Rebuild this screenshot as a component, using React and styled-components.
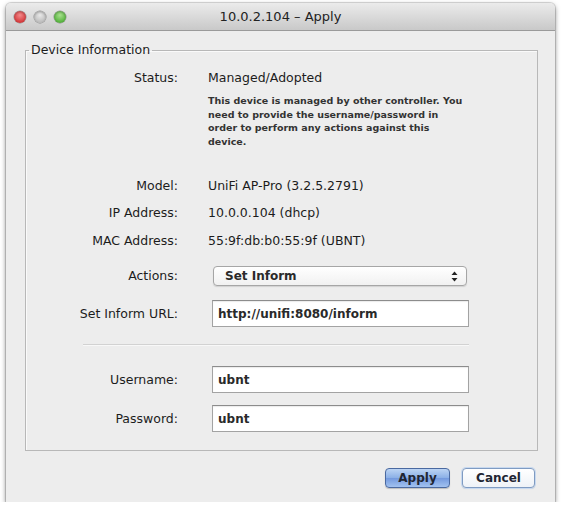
import styled, { createGlobalStyle } from 'styled-components';

const GlobalStyle = createGlobalStyle`
  html, body {
    margin: 0;
    background: #ffffff;
  }
  body {
    font-family: "DejaVu Sans", "Liberation Sans", sans-serif;
    color: #222;
  }
`;

const Page = styled.div`
  padding: 3px 10px 0 6px;
`;

const Window = styled.div`
  width: 549px;
  height: 499px;
  display: flex;
  flex-direction: column;
  background: #ededed;
  border-radius: 5px 5px 0 0;
  box-shadow: 0 2px 5px rgba(0, 0, 0, 0.5), 0 0 0 1px rgba(0, 0, 0, 0.12);
  overflow: hidden;
`;

const TitleBar = styled.div`
  height: 27px;
  display: grid;
  grid-template-columns: 1fr auto 1fr;
  align-items: center;
  padding: 0 8px;
  background: linear-gradient(#ebebeb, #c9c9c9);
  border-bottom: 1px solid #9a9a9a;
`;

const Lights = styled.div`
  display: flex;
  gap: 8px;
`;

const Light = styled.span`
  width: 12px;
  height: 12px;
  border-radius: 50%;
  background: ${p => p.$color};
  box-shadow: inset 0 1px 2px rgba(0, 0, 0, 0.25), 0 0 0 0.5px rgba(0, 0, 0, 0.35);
`;

const Title = styled.div`
  font-size: 13px;
  color: #222;
`;

const Body = styled.div`
  flex: 1;
  padding: 11px 17px 0 19px;
`;

const Group = styled.fieldset`
  margin: 0;
  padding: 0 0 18px;
  border: 1px solid #b8b8b8;
  box-shadow: inset 1px 1px 0 #fafafa;
`;

const Legend = styled.legend`
  margin-left: 3px;
  padding: 0 2px;
  font-size: 12.5px;
  line-height: 16px;
  color: #1c1c1c;
`;

const Row = styled.div`
  display: grid;
  grid-template-columns: 152px 1fr;
  column-gap: 30px;
  align-items: center;
  min-height: 18px;
  margin-top: ${p => p.$top}px;
`;

const Label = styled.div`
  text-align: right;
  font-size: 12.5px;
  line-height: 18px;
  color: #1c1c1c;
`;

const Value = styled.div`
  font-size: 12.5px;
  line-height: 18px;
  color: #1c1c1c;
`;

const Note = styled.p`
  margin: 0;
  font-size: 9.5px;
  font-weight: bold;
  line-height: 13.5px;
  color: #333;
  white-space: pre-line;
`;

const SelectBox = styled.div`
  margin-left: 5px;
  width: 254px;
  height: 20px;
  box-sizing: border-box;
  display: flex;
  align-items: center;
  justify-content: space-between;
  padding: 0 8px 0 11px;
  border: 1px solid #a6a6a6;
  border-radius: 4px;
  background: linear-gradient(#ffffff, #f1f1f1);
  box-shadow: 0 1px 1px rgba(0, 0, 0, 0.12);
  font-size: 12px;
  font-weight: bold;
  color: #2a2a2a;
`;

const Field = styled.input`
  margin-left: 4px;
  width: 257px;
  height: 27px;
  box-sizing: border-box;
  padding: 0 5px;
  border: 1px solid #a3a3a3;
  border-top-color: #8c8c8c;
  background: #fff;
  box-shadow: inset 0 1px 1px rgba(0, 0, 0, 0.08);
  font-family: "DejaVu Sans", "Liberation Sans", sans-serif;
  font-size: 12px;
  font-weight: bold;
  color: #2a2a2a;
  outline: none;
`;

const Divider = styled.hr`
  margin: 17px 0 0 57px;
  width: 386px;
  height: 0;
  border: 0;
  border-top: 1px solid #d2d2d2;
  border-bottom: 1px solid #f8f8f8;
`;

const Footer = styled.div`
  display: flex;
  justify-content: flex-end;
  gap: 12px;
  padding: 17px 3px 0 0;
`;

const Button = styled.button`
  width: ${p => p.$width}px;
  height: 20px;
  padding: 0;
  border-radius: 4px;
  font-family: "DejaVu Sans", "Liberation Sans", sans-serif;
  font-size: 12px;
  font-weight: bold;
  color: #1f2633;
  border: 1px solid ${p => (p.$primary ? '#4a69a0' : '#7f9bc2')};
  background: ${p =>
    p.$primary
      ? 'linear-gradient(#bcd4f4, #8aafe6 50%, #7399de 51%, #a2c2f0)'
      : 'linear-gradient(#ffffff, #eef2f7)'};
  box-shadow: ${p =>
    p.$primary ? '0 1px 1px rgba(0, 0, 0, 0.2)' : '0 0 0 1px #c8d9ef, 0 1px 1px rgba(0, 0, 0, 0.15)'};
`;

function UpDownArrows() {
  return (
    <svg width="7" height="11" viewBox="0 0 7 11">
      <path d="M3.5 0.5 L6.5 4 L0.5 4 Z" fill="#222" />
      <path d="M3.5 10.5 L6.5 7 L0.5 7 Z" fill="#222" />
    </svg>
  );
}

const note = `This device is managed by other controller. You
need to provide the username/password in
order to perform any actions against this
device.`;

export default function App() {
  return (
    <>
      <GlobalStyle />
      <Page>
        <Window>
          <TitleBar>
            <Lights>
              <Light $color="radial-gradient(circle at 50% 35%, #f3898a, #d53b3d 70%)" />
              <Light $color="radial-gradient(circle at 50% 35%, #e8e8e8, #bdbdbd 70%)" />
              <Light $color="radial-gradient(circle at 50% 35%, #a8e08e, #57b33f 70%)" />
            </Lights>
            <Title>10.0.2.104 – Apply</Title>
            <span />
          </TitleBar>

          <Body>
            <Group>
              <Legend>Device Information</Legend>

              <Row $top={11}>
                <Label>Status:</Label>
                <Value>Managed/Adopted</Value>
              </Row>
              <Row $top={7}>
                <span />
                <Note>{note}</Note>
              </Row>

              <Row $top={29}>
                <Label>Model:</Label>
                <Value>UniFi AP-Pro (3.2.5.2791)</Value>
              </Row>
              <Row $top={9}>
                <Label>IP Address:</Label>
                <Value>10.0.0.104 (dhcp)</Value>
              </Row>
              <Row $top={10}>
                <Label>MAC Address:</Label>
                <Value>55:9f:db:b0:55:9f (UBNT)</Value>
              </Row>

              <Row $top={16}>
                <Label>Actions:</Label>
                <SelectBox>
                  <span>Set Inform</span>
                  <UpDownArrows />
                </SelectBox>
              </Row>
              <Row $top={14}>
                <Label>Set Inform URL:</Label>
                <Field readOnly value="http://unifi:8080/inform" />
              </Row>

              <Divider />

              <Row $top={20}>
                <Label>Username:</Label>
                <Field readOnly value="ubnt" />
              </Row>
              <Row $top={12}>
                <Label>Password:</Label>
                <Field readOnly value="ubnt" />
              </Row>
            </Group>

            <Footer>
              <Button $primary $width={65}>Apply</Button>
              <Button $width={73}>Cancel</Button>
            </Footer>
          </Body>
        </Window>
      </Page>
    </>
  );
}
